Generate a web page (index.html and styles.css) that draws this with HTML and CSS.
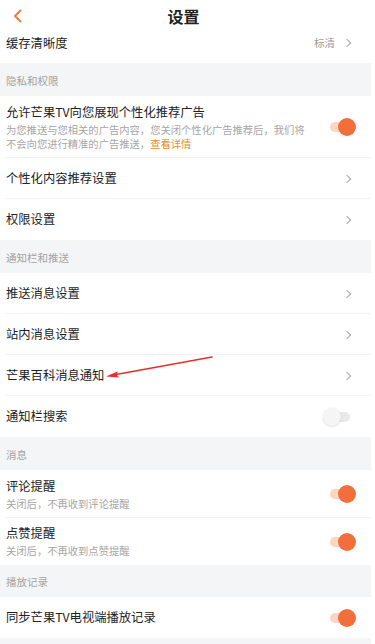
FILE: index.html
```html
<!DOCTYPE html>
<html lang="zh">
<head>
<meta charset="utf-8">
<link rel="stylesheet" href="styles.css">
</head>
<body>
<div class="page">
  <header class="topbar">
    <svg class="back" width="12" height="14" viewBox="0 0 12 14"><path d="M8.5 1.5 L3 7 L8.5 12.5" fill="none" stroke="#f07a3c" stroke-width="2" stroke-linecap="round" stroke-linejoin="round"/></svg>
    <div class="title">设置</div>
  </header>

  <div class="row row-top">
    <span class="label">缓存清晰度</span>
    <span class="right"><span class="value">标清</span><span class="chev"></span></span>
  </div>

  <div class="section">隐私和权限</div>
  <div class="row row-ad line">
    <div class="texts">
      <div class="label">允许芒果TV向您展现个性化推荐广告</div>
      <div class="sub">为您推送与您相关的广告内容，您关闭个性化广告推荐后，我们将<br>不会向您进行精准的广告推送，<span class="link">查看详情</span></div>
    </div>
    <span class="toggle on"></span>
  </div>
  <div class="row line"><span class="label">个性化内容推荐设置</span><span class="chev"></span></div>
  <div class="row"><span class="label">权限设置</span><span class="chev"></span></div>

  <div class="section">通知栏和推送</div>
  <div class="row line"><span class="label">推送消息设置</span><span class="chev"></span></div>
  <div class="row line"><span class="label">站内消息设置</span><span class="chev"></span></div>
  <div class="row line"><span class="label">芒果百科消息通知</span><span class="chev"></span></div>
  <div class="row"><span class="label">通知栏搜索</span><span class="toggle off"></span></div>

  <div class="section">消息</div>
  <div class="row row-sub line">
    <div class="texts"><div class="label">评论提醒</div><div class="sub">关闭后，不再收到评论提醒</div></div>
    <span class="toggle on"></span>
  </div>
  <div class="row row-sub row-sub2">
    <div class="texts"><div class="label">点赞提醒</div><div class="sub">关闭后，不再收到点赞提醒</div></div>
    <span class="toggle on"></span>
  </div>

  <div class="section section-short">播放记录</div>
  <div class="row"><span class="label">同步芒果TV电视端播放记录</span><span class="toggle on"></span></div>
  <div class="bottom"></div>

  <svg class="annot" width="375" height="644" viewBox="0 0 375 644">
    <path d="M212 357 L116 374.5" stroke="#ee2b2b" stroke-width="1.6" stroke-linecap="round" fill="none"/>
    <path d="M106 376.5 L118 371.2 L116.5 374.6 L119 377.6 Z" fill="#ee2b2b"/>
  </svg>
</div>
</body>
</html>
```

FILE: styles.css
```css
* { box-sizing: border-box; }
html, body { margin: 0; padding: 0; background: #fff; }
body {
  font-family: "Noto Sans CJK SC", "Noto Sans", sans-serif;
  color: #222;
}
.page {
  position: relative;
  width: 371px;
  height: 644px;
  overflow: hidden;
  background: #f4f5f6;
}
.topbar {
  height: 34px;
  background: #fff;
  display: flex;
  align-items: center;
  justify-content: center;
  position: relative;
}
.back {
  position: absolute;
  left: 12px;
  top: 9px;
}
.title {
  font-size: 16px;
  font-weight: 700;
  color: #222;
  transform: translate(-2px, -1px);
}
.row {
  height: 41px;
  background: #fff;
  display: flex;
  align-items: center;
  justify-content: space-between;
  padding: 0 20px 0 6px;
  position: relative;
}
.row.line::after {
  content: "";
  position: absolute;
  left: 6px;
  right: 0;
  bottom: 0;
  height: 1px;
  background: #f1f2f3;
}
.row-top {
  height: 29px;
  align-items: flex-start;
  padding-top: 1px;
}
.label {
  font-size: 12.3px;
  line-height: 17px;
  color: #222;
}
.right { display: flex; align-items: center; }
.value {
  font-size: 10.5px;
  color: #9a9a9a;
  margin-right: 9px;
}
.chev {
  width: 6px;
  height: 6px;
  border-top: 1.1px solid #a8a8a8;
  border-right: 1.1px solid #a8a8a8;
  transform: rotate(45deg);
  margin-right: 1px;
}
.section {
  height: 33px;
  display: flex;
  align-items: center;
  padding-left: 6px;
  font-size: 10.5px;
  color: #a3a3a3;
  padding-top: 1px;
}
.section-short { height: 32px; }
.row-ad {
  height: 62px;
  align-items: flex-start;
  padding-top: 8px;
}
.row-ad .label { line-height: 16px; }
.row-ad .toggle { align-self: center; margin-top: -8px; }
.sub {
  font-size: 10.3px;
  line-height: 14px;
  color: #a6a6a6;
  margin-top: 3px;
}
.link { color: #e8892f; }
.row-sub {
  height: 48px;
  align-items: center;
}
.row-sub .label { line-height: 16px; }
.row-sub .sub { margin-top: 3px; }
.row-sub2 { height: 47px; }
.toggle {
  position: relative;
  width: 28px;
  height: 20px;
  flex: none;
  margin-right: -5px;
}
.toggle::before {
  content: "";
  position: absolute;
  left: 2px;
  right: 2px;
  top: 5px;
  height: 10px;
  border-radius: 5px;
  background: #fcd5c3;
}
.toggle::after {
  content: "";
  position: absolute;
  top: 1px;
  width: 18px;
  height: 18px;
  border-radius: 50%;
}
.toggle.on::after {
  right: 0;
  background: #f26e3a;
}
.toggle.off { margin-right: -3px; }
.toggle.off::before { background: #e9e9e9; left: 4px; right: 4px; }
.toggle.off::after {
  left: -3px;
  background: #f5f5f5;
  box-shadow: 0 0.5px 2px rgba(0,0,0,0.18);
}
.bottom { height: 20px; }
.annot {
  position: absolute;
  left: 0;
  top: 0;
  pointer-events: none;
}
```
